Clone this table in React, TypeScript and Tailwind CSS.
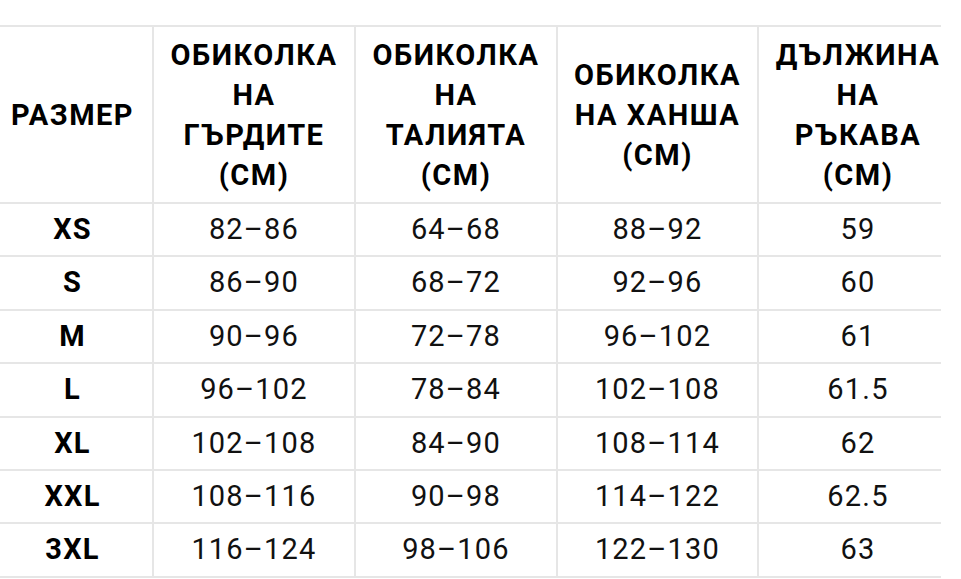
const headers = [
  ['РАЗМЕР'],
  ['ОБИКОЛКА', 'НА', 'ГЪРДИТЕ', '(СМ)'],
  ['ОБИКОЛКА', 'НА', 'ТАЛИЯТА', '(СМ)'],
  ['ОБИКОЛКА', 'НА ХАНША', '(СМ)'],
  ['ДЪЛЖИНА', 'НА', 'РЪКАВА', '(СМ)'],
];

const rows = [
  ['XS', '82–86', '64–68', '88–92', '59'],
  ['S', '86–90', '68–72', '92–96', '60'],
  ['M', '90–96', '72–78', '96–102', '61'],
  ['L', '96–102', '78–84', '102–108', '61.5'],
  ['XL', '102–108', '84–90', '108–114', '62'],
  ['XXL', '108–116', '90–98', '114–122', '62.5'],
  ['3XL', '116–124', '98–106', '122–130', '63'],
];

const cols = 'grid grid-cols-[152px_202px_202px_201px_184px]';
const colPad = ['pr-[7px]', 'border-l-2', 'border-l-2', 'border-l-2', 'border-l-2 pl-4'];

export default function App() {
  return (
    <div
      className="w-[961px] h-[579px] bg-white pt-[25px] overflow-hidden text-[#111]"
      style={{ fontFamily: 'Roboto, "Liberation Sans", sans-serif' }}
    >
      <div className="w-[941px] border-t-2 border-[#e6e6e6]">
        <div className={`${cols} h-[177px] border-b-2 border-[#e6e6e6]`}>
          {headers.map((lines, i) => (
            <div
              key={i}
              className={`flex flex-col items-center justify-center text-center font-bold text-[29px] leading-[40px] tracking-[1.5px] text-black whitespace-nowrap border-[#e6e6e6] ${colPad[i]}`}
            >
              {lines.map((l, j) => (
                <span key={j}>{l}</span>
              ))}
            </div>
          ))}
        </div>
        {rows.map((r, i) => (
          <div key={i} className={`${cols} h-[53.4px] border-b-2 border-[#e6e6e6]`}>
            {r.map((c, j) => (
              <div
                key={j}
                className={`flex items-center justify-center text-[29px] tracking-[1.2px] border-[#e6e6e6] ${colPad[j]} ${j === 0 ? 'font-bold text-black' : ''}`}
              >
                {c}
              </div>
            ))}
          </div>
        ))}
      </div>
    </div>
  );
}
